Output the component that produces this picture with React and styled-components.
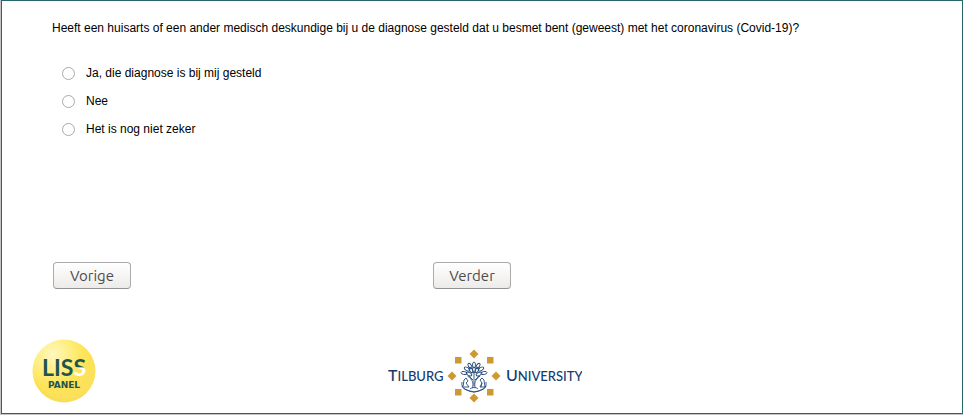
import React, { useState } from "react";
import styled, { createGlobalStyle } from "styled-components";

const GlobalStyle = createGlobalStyle`
  * { box-sizing: border-box; }
  body {
    margin: 0;
    background: #c4c4c4;
    color: #000;
    font: 12px/16px "Liberation Sans", Arial, sans-serif;
  }
`;

const Page = styled.form`
  margin: 0 0 1px 1px;
  padding: 19px 24px 9px 30px;
  border: 1px solid #26666c;
  background: #fff;
`;

const Question = styled.fieldset`
  margin: 0 0 119px;
  padding: 0 20px;
  border: 0;
  min-width: 0;
`;

const QuestionText = styled.legend`
  margin-bottom: 23px;
  padding: 0;
`;

const Options = styled.div`
  display: flex;
  flex-direction: column;
  align-items: flex-start;
  padding-left: 10px;
`;

const Option = styled.label`
  display: flex;
  align-items: center;
  gap: 11px;
  height: 28px;
`;

const Radio = styled.input`
  appearance: none;
  width: 13px;
  height: 13px;
  margin: 0;
  border: 1px solid #a9a9a9;
  border-radius: 50%;
  background: #fff;

  &:checked {
    background: radial-gradient(circle, #444 3px, #fff 4px);
  }
`;

const Navigation = styled.div`
  display: flex;
  gap: 302px;
  margin-bottom: 50px;
  padding-left: 21px;
`;

const NavButton = styled.button`
  width: 78px;
  height: 27px;
  flex: none;
  padding: 0;
  border: 1px solid #aaa;
  border-bottom-color: #929292;
  border-radius: 4px;
  background: linear-gradient(#fff, #f6f5f4 50%, #edebe9);
  color: #4c4c4c;
  font: 15px/24px "Ubuntu", "Noto Sans", sans-serif;
`;

const Footer = styled.footer`
  display: grid;
  grid-template-columns: 1fr auto 1fr;
  align-items: end;
`;

const Logo = styled.svg`
  display: block;
`;

function LissLogo() {
  return (
    <Logo width="64" height="65" viewBox="0 0 64 65" role="img" aria-label="LISS panel">
      <defs>
        <radialGradient id="liss-ball" cx="32%" cy="24%" r="76%">
          <stop offset="0" stopColor="#fff8c0" />
          <stop offset="0.35" stopColor="#ffef86" />
          <stop offset="0.65" stopColor="#fde458" />
          <stop offset="1" stopColor="#fbe05c" />
        </radialGradient>
        <linearGradient id="liss-tail" gradientUnits="userSpaceOnUse" x1="0" y1="19" x2="0" y2="36">
          <stop offset="0.52" stopColor="#20544f" />
          <stop offset="0.58" stopColor="#fff" />
        </linearGradient>
      </defs>
      <circle cx="32" cy="32" r="31.500" fill="url(#liss-ball)" />
      <path d="M2 39a31 31 0 0 0 56 10C47 65 13 66 2 39Z" fill="#f8d94c" opacity=".5" />
      <g fontWeight="700" fill="#20544f" textAnchor="middle">
        <text x="32" y="37" fontFamily="Lato, sans-serif" fontSize="23">
          LIS<tspan fill="url(#liss-tail)">S</tspan>
        </text>
        <text x="32" y="49" fontFamily="DejaVu Sans, sans-serif" fontSize="9">PANEL</text>
      </g>
    </Logo>
  );
}

const diamonds = [[86, 6], [64, 28], [108, 28], [86, 50]];
const squares = [[70, 12], [102, 12], [70, 44], [102, 44]];
const leaves = [
  [86, 17, 0], [82, 18, -30], [90, 18, 30], [79, 21, -60], [93, 21, 60],
  [83, 22, -30], [89, 22, 30], [86, 22, 0], [76, 25, -80], [96, 25, 80],
  [81, 26, -65], [91, 26, 65],
];

function TilburgLogo() {
  return (
    <Logo width="194" height="56" viewBox="0 0 194 56" role="img" aria-label="Tilburg University">
      <g fill="#cc9933">
        {diamonds.map(([x, y]) => (
          <path key={`${x}-${y}`} d={`M${x} ${y - 4.5}l4.500 4.500-4.500 4.500-4.500-4.500Z`} />
        ))}
        {squares.map(([x, y]) => (
          <rect key={`${x}-${y}`} x={x - 3} y={y - 3} width="6.500" height="6.500" />
        ))}
      </g>
      <g fill="none" stroke="#254c7c" strokeWidth="0.900">
        {leaves.map(([x, y, angle]) => (
          <ellipse key={`${x}-${y}`} cx={x} cy={y} rx="1.500" ry="3" transform={`rotate(${angle} ${x} ${y})`} />
        ))}
        <path d="M84.500 40c1-5 .6-8-5-12m7.700 12c-1-5-.6-8 5-12M86 38V23m-5 5 4 4m6-4-4 4M82 41c2-2 6-2 8 0" />
        <path d="M74 34q-1 6 4 7.500 8 5 16 0 5-1.500 4-7.500M74 38q2 4 6 4.500 6 3 12 0 4-.5 6-4.500" />
        <path d="M75 39l1-7 2-2 2 3-2 2 3 4h-5m17 0 1-4-2-3 2-2 2 2 1 7h-5l2-4" />
      </g>
      <g fill="#123b70" fontFamily="Lato, sans-serif" fontWeight="500">
        <text x="0" y="33" fontSize="16">T<tspan fontSize="13">ILBURG</tspan></text>
        <text x="118" y="33" fontSize="16">U<tspan fontSize="13">NIVERSITY</tspan></text>
      </g>
    </Logo>
  );
}

const options = [
  { value: "ja", label: "Ja, die diagnose is bij mij gesteld" },
  { value: "nee", label: "Nee" },
  { value: "onzeker", label: "Het is nog niet zeker" },
];

export default function App() {
  const [answer, setAnswer] = useState("");

  return (
    <>
      <GlobalStyle />
      <Page onSubmit={(event) => event.preventDefault()}>
        <Question>
          <QuestionText>
            Heeft een huisarts of een ander medisch deskundige bij u de diagnose gesteld dat u besmet bent (geweest) met het coronavirus (Covid-19)?
          </QuestionText>
          <Options>
            {options.map(({ value, label }) => (
              <Option key={value}>
                <Radio
                  type="radio"
                  name="diagnose"
                  value={value}
                  checked={answer === value}
                  onChange={() => setAnswer(value)}
                />
                {label}
              </Option>
            ))}
          </Options>
        </Question>
        <Navigation>
          <NavButton type="button">Vorige</NavButton>
          <NavButton type="submit">Verder</NavButton>
        </Navigation>
        <Footer>
          <LissLogo />
          <TilburgLogo />
        </Footer>
      </Page>
    </>
  );
}
